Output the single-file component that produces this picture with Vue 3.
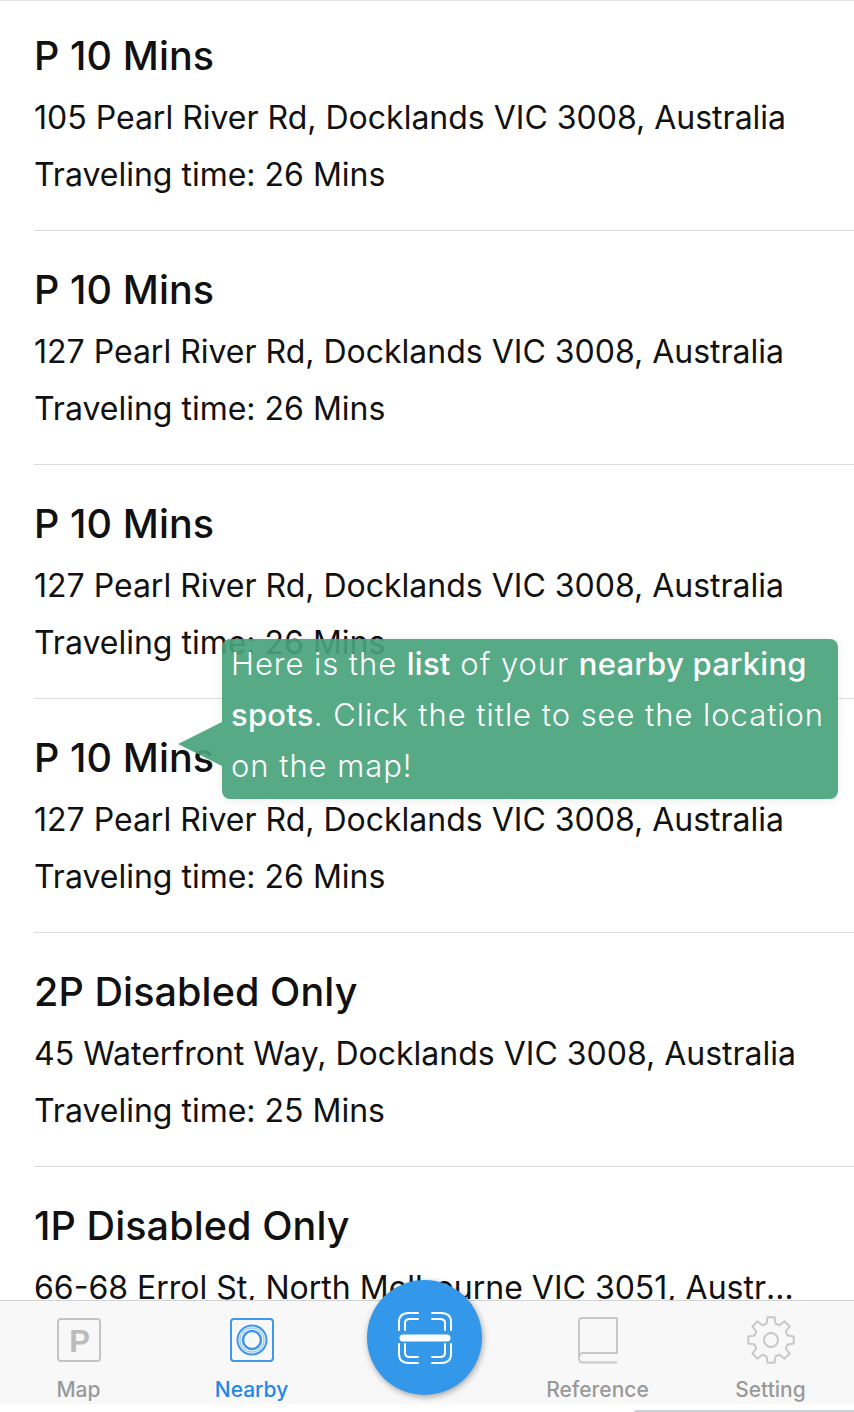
<template>
  <div class="screen">
    <div class="list">
      <div v-for="(spot, i) in spots" :key="i" class="spot">
        <div class="spot-title">{{ spot.title }}</div>
        <div class="spot-line">{{ spot.address }}</div>
        <div class="spot-line">Traveling time: {{ spot.time }} Mins</div>
      </div>
    </div>

    <div class="tip">
      <span class="tip-arrow"></span>
      <div class="tip-text">Here is the <b>list</b> of your <b>nearby parking spots</b>. Click the title to see the location on the map!</div>
    </div>

    <div class="tabbar">
      <div class="tabs">
        <div class="tab">
          <svg class="tab-icon" viewBox="0 0 48 48" fill="none" stroke="#c4c4c4" stroke-width="2">
            <rect x="3" y="3" width="42" height="42" rx="3" />
            <text x="24.500" y="36" text-anchor="middle" class="p-glyph">P</text>
          </svg>
          <span class="tab-label">Map</span>
        </div>
        <div class="tab active">
          <svg class="tab-icon" viewBox="0 0 48 48" fill="none" stroke="#3f97ea" stroke-width="2">
            <rect x="3" y="3" width="42" height="42" rx="3" />
            <circle cx="24" cy="24" r="14.500" />
            <circle cx="24" cy="24" r="12" stroke-width="1.500" opacity="0.45" />
            <circle cx="24" cy="24" r="9" stroke-width="2.500" />
          </svg>
          <span class="tab-label">Nearby</span>
        </div>
        <div class="tab"></div>
        <div class="tab">
          <svg class="tab-icon" viewBox="0 0 48 48" fill="none" stroke="#c8c8c8" stroke-width="2">
            <path d="M5 41V5Q5 2 8 2H43V37H9Q5 37 5 42Q5 46.500 9 46.500H43" />
          </svg>
          <span class="tab-label">Reference</span>
        </div>
        <div class="tab">
          <svg class="tab-icon" viewBox="0 0 48 48" fill="none" stroke="#c8c8c8" stroke-width="2" stroke-linejoin="round">
            <path :d="gearPath" />
            <circle cx="24" cy="24" r="7" />
          </svg>
          <span class="tab-label">Setting</span>
        </div>
      </div>
    </div>

    <div class="scan">
      <svg viewBox="0 0 56 56" width="56" height="56" fill="none" stroke="#fff" stroke-width="2" stroke-linecap="round">
        <path d="M2 20V12C2 6 6 3 12 3H21M8 20V13C8 10 10 9 13 9H21" />
        <path d="M54 20V12C54 6 50 3 44 3H35M48 20V13C48 10 46 9 43 9H35" />
        <path d="M2 34V44C2 50 6 53 12 53H21M8 34V43C8 46 10 47 13 47H21" />
        <path d="M54 34V44C54 50 50 53 44 53H35M48 34V43C48 46 46 47 43 47H35" />
        <path d="M6 28H50" stroke-width="7" />
      </svg>
    </div>

    <div class="home-bar"></div>
  </div>
</template>

<script setup>
const spots = [
  { title: 'P 10 Mins', address: '105 Pearl River Rd, Docklands VIC 3008, Australia', time: 26 },
  { title: 'P 10 Mins', address: '127 Pearl River Rd, Docklands VIC 3008, Australia', time: 26 },
  { title: 'P 10 Mins', address: '127 Pearl River Rd, Docklands VIC 3008, Australia', time: 26 },
  { title: 'P 10 Mins', address: '127 Pearl River Rd, Docklands VIC 3008, Australia', time: 26 },
  { title: '2P Disabled Only', address: '45 Waterfront Way, Docklands VIC 3008, Australia', time: 25 },
  { title: '1P Disabled Only', address: '66-68 Errol St, North Melbourne VIC 3051, Australia and more', time: 25 }
]

// eight teeth, first one pointing straight up
const gearPoint = (r, deg) => {
  const a = (deg * Math.PI) / 180
  return `${(24 + r * Math.sin(a)).toFixed(2)} ${(24 - r * Math.cos(a)).toFixed(2)}`
}
const gearPath = Array.from({ length: 8 }, (_, k) => {
  const c = k * 45
  return [
    gearPoint(17, c - 15),
    gearPoint(23, c - 9),
    gearPoint(23, c + 9),
    gearPoint(17, c + 15)
  ].join('L')
}).reduce((d, seg, k) => d + (k ? 'L' : 'M') + seg, '') + 'Z'
</script>

<style>
html,
body {
  margin: 0;
  background: #fff;
}
</style>

<style scoped>
.screen {
  position: relative;
  width: 854px;
  height: 1412px;
  overflow: hidden;
  display: flex;
  flex-direction: column;
  background: #fff;
  font-family: Inter, "Liberation Sans", sans-serif;
  color: #111;
}

.list {
  flex: 1;
  min-height: 0;
  overflow: hidden;
  border-top: 1px solid #e2e2e2;
}

.spot {
  height: 199px;
  margin-left: 34px;
  padding-top: 34px;
  border-bottom: 1px solid #dcdcdc;
}

.spot:first-child {
  padding-top: 30px;
}

.spot-title {
  font-size: 39.500px;
  line-height: 50px;
  height: 58px;
  font-weight: 450;
  letter-spacing: 0.1px;
}

.spot-line {
  width: 764px;
  font-size: 32px;
  line-height: 57px;
  white-space: nowrap;
  overflow: hidden;
  text-overflow: ellipsis;
}

.tip {
  position: absolute;
  left: 222px;
  top: 639px;
  width: 616px;
  height: 160px;
  box-sizing: border-box;
  padding: 0 9px;
  border-radius: 8px;
  background: rgba(72, 163, 123, 0.92);
  box-shadow: 0 2px 10px rgba(0, 0, 0, 0.08);
  color: #fff;
  font-size: 31px;
  font-weight: 300;
  line-height: 51px;
  letter-spacing: 0.95px;
}

.tip-text {
  margin-top: -1px;
}

.tip b {
  font-weight: 500;
  letter-spacing: 0.25px;
}

.tip-arrow {
  position: absolute;
  left: -44px;
  top: 83px;
  border-style: solid;
  border-width: 22px 44px 22px 0;
  border-color: transparent rgba(72, 163, 123, 0.92) transparent transparent;
}

.tabbar {
  flex: none;
  height: 104px;
  margin-bottom: 8px;
  box-sizing: border-box;
  border-top: 1px solid #d4d4d4;
  background: #f8f8f8;
}

.tabs {
  display: grid;
  grid-template-columns: repeat(5, 173px);
  margin-left: -8px;
}

.tab {
  display: flex;
  flex-direction: column;
  align-items: center;
  color: #999;
}

.tab.active {
  color: #2486e6;
}

.tab-icon {
  width: 48px;
  height: 48px;
  margin-top: 15px;
  overflow: visible;
}

.p-glyph {
  font-family: "Liberation Sans", sans-serif;
  font-size: 31px;
  font-weight: 700;
  fill: #bcbcbc;
  stroke: none;
}

.tab-label {
  margin-top: 13px;
  font-size: 21px;
  line-height: 26px;
  font-weight: 500;
}

.scan {
  position: absolute;
  left: 367px;
  top: 1280px;
  width: 115px;
  height: 115px;
  border-radius: 50%;
  background: #3398ea;
  box-shadow: 1px 2px 6px rgba(0, 0, 0, 0.35);
  display: flex;
  align-items: center;
  justify-content: center;
}

.home-bar {
  position: absolute;
  left: 634px;
  right: 0;
  bottom: 0;
  height: 2px;
  background: #cfcfd6;
  border-top-left-radius: 2px;
}
</style>
